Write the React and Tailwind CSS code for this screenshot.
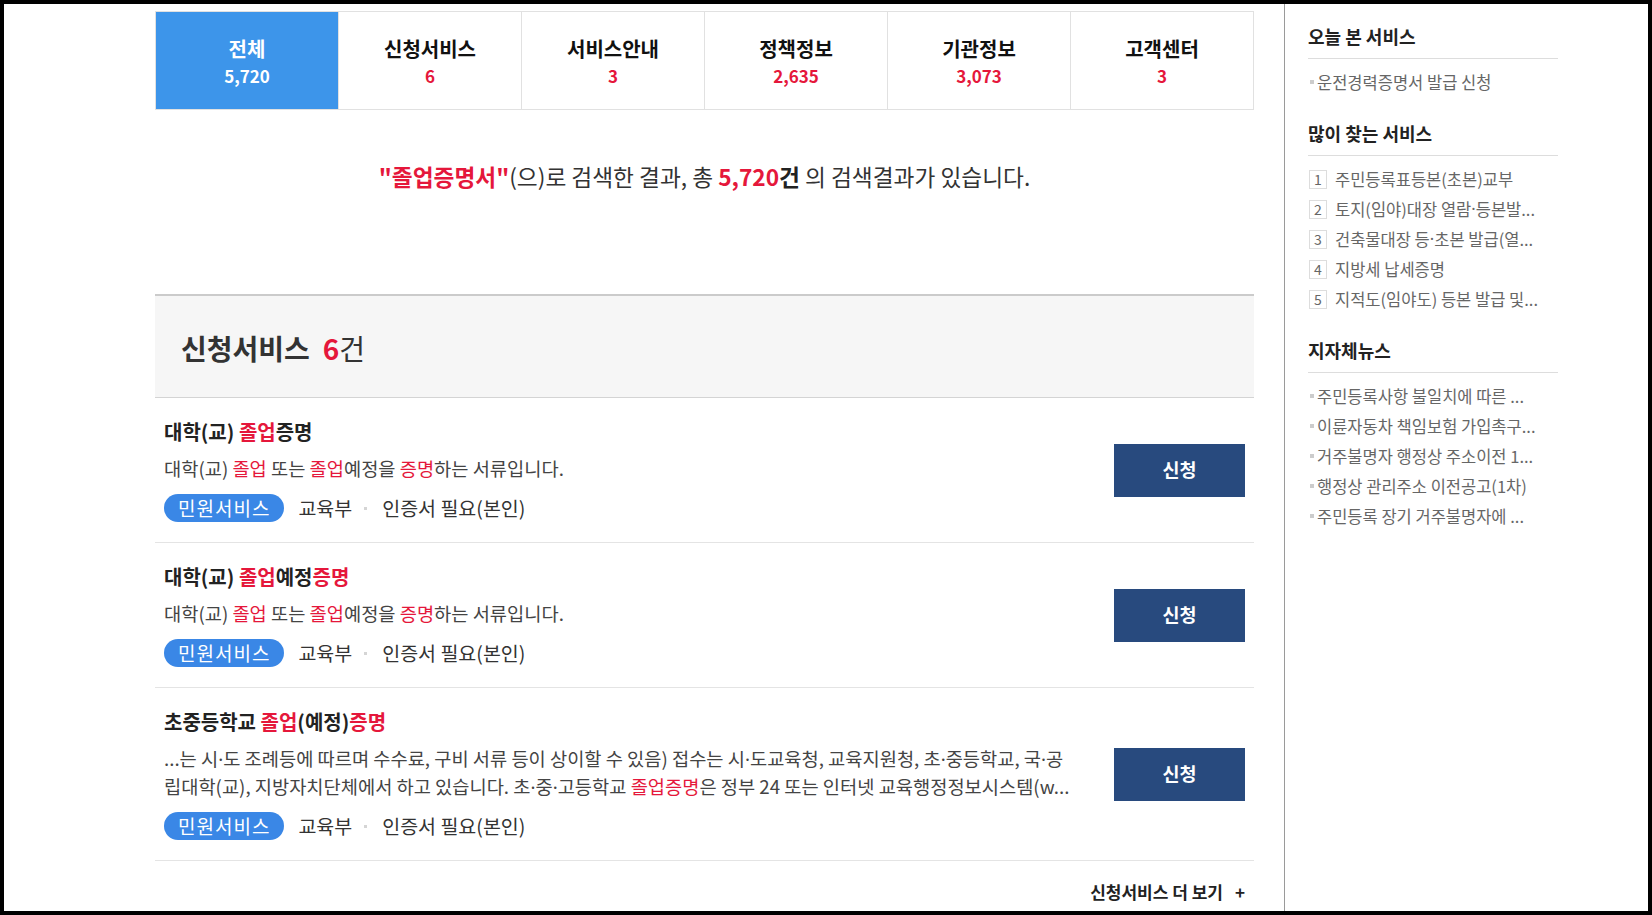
import React from 'react';

const tabs = [
    { label: '전체', count: '5,720', active: true },
    { label: '신청서비스', count: '6' },
    { label: '서비스안내', count: '3' },
    { label: '정책정보', count: '2,635' },
    { label: '기관정보', count: '3,073' },
    { label: '고객센터', count: '3' },
];

// narrow middle dot, like the original page font
const Dot = () => <span className="font-['Noto_Sans'] leading-none">·</span>;

const popular = [
    '주민등록표등본(초본)교부',
    <>토지(임야)대장 열람<Dot />등본발...</>,
    <>건축물대장 등<Dot />초본 발급(열...</>,
    '지방세 납세증명',
    '지적도(임야도) 등본 발급 및...',
];

const news = [
    '주민등록사항 불일치에 따른 ...',
    '이륜자동차 책임보험 가입촉구...',
    '거주불명자 행정상 주소이전 1...',
    '행정상 관리주소 이전공고(1차)',
    '주민등록 장기 거주불명자에 ...',
];

const Hl = ({ children }) => <span className="text-[#e5173b]">{children}</span>;

const Tags = () => (
    <div className="mt-[12px] flex items-center text-[19.5px] leading-[28px] text-[#333]">
        <span className="h-[28px] rounded-full bg-[#3a87e6] px-[14px] text-[19px] tracking-[1px] text-white">민원서비스</span>
        <span className="ml-[14px]">교육부</span>
        <span className="ml-[12px] mr-[15px] h-[3px] w-[3px] bg-[#d5d5d5]" />
        <span>인증서 필요(본인)</span>
    </div>
);

const ServiceItem = ({ title, children }) => (
    <li className="flex items-center border-b border-[#e4e4e4] px-[9px] pt-[20px] pb-[20px]">
        <div className="flex-1">
            <h4 className="text-[20px] font-bold leading-[28px] text-[#222]">{title}</h4>
            <p className="mt-[8px] text-[18.7px] leading-[28px] text-[#444]">{children}</p>
            <Tags />
        </div>
        <button className="h-[53px] w-[131px] bg-[#284a7e] text-[18.5px] font-bold text-white">신청</button>
    </li>
);

const SideTitle = ({ children, className }) => (
    <h3 className={`border-b border-[#dddddd] pb-[10px] text-[18px] font-bold leading-[24px] text-[#222] ${className || ''}`}>
        {children}
    </h3>
);

const Bullet = ({ children }) => (
    <li className="flex items-center text-[16.5px] leading-[30px] text-[#666]">
        <span className="ml-[2px] mr-[3px] h-[4px] w-[4px] bg-[#cccccc]" />
        {children}
    </li>
);

export default function App() {
    return (
        <div className="flex h-[915px] w-[1652px] overflow-hidden border-4 border-black bg-white font-['Noto_Sans_CJK_KR','Noto_Sans',sans-serif]">
            <main className="w-[1280px] shrink-0 pl-[151px] pt-[7px]">
                <div className="w-[1099px]">
                    <ul className="flex border border-[#e1e1e1]">
                        {tabs.map((t, i) => (
                            <li
                                key={t.label}
                                className={`flex h-[97px] flex-1 flex-col items-center pt-[24px] ${i > 0 ? 'border-l border-[#e1e1e1]' : ''} ${t.active ? 'bg-[#3d95ea]' : ''}`}
                            >
                                <span className={`text-[20px] font-bold leading-[26px] ${t.active ? 'text-white' : 'text-[#111]'}`}>{t.label}</span>
                                <span className={`text-[17px] font-bold leading-[28px] ${t.active ? 'text-white' : 'text-[#e5173b]'}`}>{t.count}</span>
                            </li>
                        ))}
                    </ul>

                    <div className="h-[184px] pt-[51px]">
                        <p className="text-center text-[22.7px] leading-[32px] text-[#333]">
                            <strong className="text-[#e5173b]">"졸업증명서"</strong>(으)로 검색한 결과, 총{' '}
                            <strong className="text-[#e5173b]">5,720</strong>
                            <strong className="text-[#222]">건</strong> 의 검색결과가 있습니다.
                        </p>
                    </div>

                    <div className="flex h-[104px] items-center border-t-2 border-b border-t-[#cbcbcb] border-b-[#d4d4d4] bg-[#f6f6f6] pl-[26px] pt-[3px]">
                        <h2 className="text-[28px] leading-[36px] text-[#333]">
                            <span className="font-bold">신청서비스</span>
                            <span className="ml-[13px] font-bold text-[#e5173b]">6</span>
                            <span>건</span>
                        </h2>
                    </div>

                    <ul>
                        <ServiceItem title={<>대학(교) <Hl>졸업</Hl>증명</>}>
                            대학(교) <Hl>졸업</Hl> 또는 <Hl>졸업</Hl>예정을 <Hl>증명</Hl>하는 서류입니다.
                        </ServiceItem>
                        <ServiceItem title={<>대학(교) <Hl>졸업</Hl>예정<Hl>증명</Hl></>}>
                            대학(교) <Hl>졸업</Hl> 또는 <Hl>졸업</Hl>예정을 <Hl>증명</Hl>하는 서류입니다.
                        </ServiceItem>
                        <ServiceItem title={<>초중등학교 <Hl>졸업</Hl>(예정)<Hl>증명</Hl></>}>
                            ...는 시<Dot />도 조례등에 따르며 수수료, 구비 서류 등이 상이할 수 있음) 접수는 시<Dot />도교육청, 교육지원청, 초<Dot />중등학교, 국<Dot />공
                            <br />
                            립대학(교), 지방자치단체에서 하고 있습니다. 초<Dot />중<Dot />고등학교 <Hl>졸업증명</Hl>은 정부 24 또는 인터넷 교육행정정보시스템(w...
                        </ServiceItem>
                    </ul>

                    <div className="flex justify-end pr-[9px] pt-[19px] text-[17px] leading-[24px] text-[#222]">
                        <span className="font-bold">신청서비스 더 보기</span>
                        <span className="ml-[12px] font-bold">+</span>
                    </div>
                </div>
            </main>

            <aside className="flex-1 border-l border-[#9a9a9a] pl-[23px] pt-[20px]">
                <div className="w-[250px]">
                    <SideTitle>오늘 본 서비스</SideTitle>
                    <ul className="mt-[8px]">
                        <Bullet>운전경력증명서 발급 신청</Bullet>
                    </ul>

                    <SideTitle className="mt-[24px]">많이 찾는 서비스</SideTitle>
                    <ul className="mt-[8px]">
                        {popular.map((p, i) => (
                            <li key={i} className="flex items-center text-[16.5px] leading-[30px] text-[#666]">
                                <span className="ml-[1px] mr-[8px] flex h-[19px] w-[18px] items-center justify-center border border-[#dddddd] text-[14px] leading-none">
                                    {i + 1}
                                </span>
                                {p}
                            </li>
                        ))}
                    </ul>

                    <SideTitle className="mt-[24px]">지자체뉴스</SideTitle>
                    <ul className="mt-[8px]">
                        {news.map((n) => (
                            <Bullet key={n}>{n}</Bullet>
                        ))}
                    </ul>
                </div>
            </aside>
        </div>
    );
}
